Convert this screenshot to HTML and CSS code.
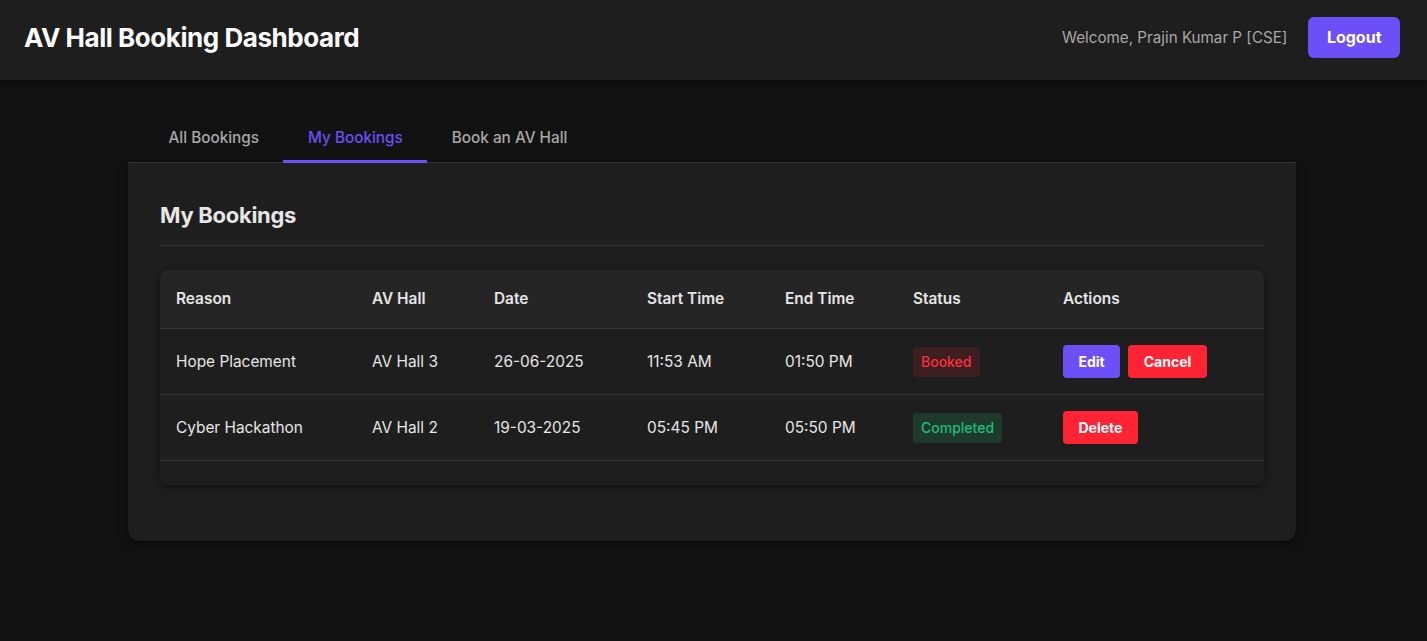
FILE: index.html
```html
<!DOCTYPE html>
<html lang="en">
<head>
<meta charset="utf-8">
<title>AV Hall Booking Dashboard</title>
<link rel="stylesheet" href="styles.css">
</head>
<body>
<header class="topbar">
  <h1 class="brand">AV Hall Booking Dashboard</h1>
  <div class="user">
    <span class="welcome">Welcome, Prajin Kumar P [CSE]</span>
    <button class="btn btn-logout">Logout</button>
  </div>
</header>
<main class="main">
  <nav class="tabs">
    <a class="tab">All Bookings</a>
    <a class="tab active">My Bookings</a>
    <a class="tab">Book an AV Hall</a>
  </nav>
  <section class="card">
    <h2 class="card-title">My Bookings</h2>
    <div class="table-wrap">
      <table class="bookings">
        <colgroup>
          <col class="c1"><col class="c2"><col class="c3"><col class="c4"><col class="c5"><col class="c6"><col class="c7">
        </colgroup>
        <thead>
          <tr>
            <th>Reason</th><th>AV Hall</th><th>Date</th><th>Start Time</th><th>End Time</th><th>Status</th><th>Actions</th>
          </tr>
        </thead>
        <tbody>
          <tr>
            <td>Hope Placement</td><td>AV Hall 3</td><td>26-06-2025</td><td>11:53 AM</td><td>01:50 PM</td>
            <td><span class="badge badge-booked">Booked</span></td>
            <td><div class="actions"><button class="btn btn-sm btn-edit">Edit</button><button class="btn btn-sm btn-red">Cancel</button></div></td>
          </tr>
          <tr>
            <td>Cyber Hackathon</td><td>AV Hall 2</td><td>19-03-2025</td><td>05:45 PM</td><td>05:50 PM</td>
            <td><span class="badge badge-done">Completed</span></td>
            <td><div class="actions"><button class="btn btn-sm btn-red">Delete</button></div></td>
          </tr>
        </tbody>
      </table>
    </div>
  </section>
</main>
</body>
</html>
```
FILE: styles.css
```css
* { box-sizing: border-box; }
html, body { margin: 0; padding: 0; }
body {
  background: #121212;
  color: #e0e0e0;
  font-family: Inter, "Noto Sans", "Liberation Sans", sans-serif;
  min-height: 641px;
}
.topbar {
  height: 80px;
  background: #1e1e1e;
  display: flex;
  align-items: center;
  justify-content: space-between;
  padding: 0 27px 5px 24px;
  box-shadow: 0 2px 8px rgba(0,0,0,0.5);
  position: relative;
}
.brand {
  margin: 0;
  font-size: 26px;
  font-weight: 700;
  color: #ffffff;
  letter-spacing: -0.45px;
}
.user {
  display: flex;
  align-items: center;
  gap: 21px;
}
.welcome {
  color: #a8a8a8;
  font-size: 15.2px;
}
.btn {
  font-family: inherit;
  border: none;
  color: #fff;
  font-weight: 700;
  cursor: pointer;
}
.btn-logout {
  background: #6c4ff6;
  font-size: 16px;
  line-height: 19px;
  padding: 11px 18.5px;
  border-radius: 6px;
}
.main {
  padding: 32px 131px 0 128px;
}
.tabs {
  display: flex;
  padding-left: 16px;
  border-bottom: 1px solid #333;
}
.tab {
  font-size: 15.3px;
  font-weight: 500;
  color: #a8a8a8;
  padding: 16px 24.5px 12px;
  line-height: 20px;
  border-bottom: 3px solid transparent;
  margin-bottom: -1px;
}
.tab.active {
  color: #6c4ff6;
  border-bottom-color: #6c4ff6;
}
.card {
  background: #1e1e1e;
  border-radius: 0 0 12px 12px;
  padding: 32px 32px 56px;
  box-shadow: 0 4px 12px rgba(0,0,0,0.4);
}
.card-title {
  margin: 0 0 24px;
  font-size: 22px;
  font-weight: 700;
  line-height: 40px;
  padding-bottom: 10px;
  border-bottom: 1px solid #333;
  color: #e6e6e6;
  letter-spacing: -0.3px;
}
.table-wrap {
  background: #1e1e1e;
  border-radius: 8px;
  box-shadow: 0 2px 8px rgba(0,0,0,0.45);
  padding-bottom: 24px;
  overflow: hidden;
}
.bookings {
  width: 100%;
  border-collapse: collapse;
  font-size: 15.4px;
}
.c1 { width: 196px; }
.c2 { width: 122px; }
.c3 { width: 153px; }
.c4 { width: 138px; }
.c5 { width: 128px; }
.c6 { width: 150px; }
.bookings th {
  background: #252525;
  text-align: left;
  font-weight: 600;
  padding: 20px 16px;
  line-height: 18px;
  color: #e6e6e6;
  border-bottom: 1px solid #333;
}
.bookings td {
  padding: 16px;
  line-height: 18px;
  vertical-align: middle;
  border-bottom: 1px solid #333;
  color: #e6e6e6;
}
.badge {
  display: inline-block;
  font-size: 14px;
  font-weight: 500;
  padding: 6px 8px;
  line-height: 18px;
  border-radius: 4px;
}
.badge-booked { background: #3d1f21; color: #ff2f3d; }
.badge-done { background: #1d3a2d; color: #1fbf76; }
.actions { display: flex; gap: 8px; }
.btn-sm {
  font-size: 14px;
  line-height: 17px;
  padding: 8px 15.5px;
  border-radius: 4px;
}
.btn-edit { background: #6c4ff6; }
.btn-red { background: #ff2433; }
```
